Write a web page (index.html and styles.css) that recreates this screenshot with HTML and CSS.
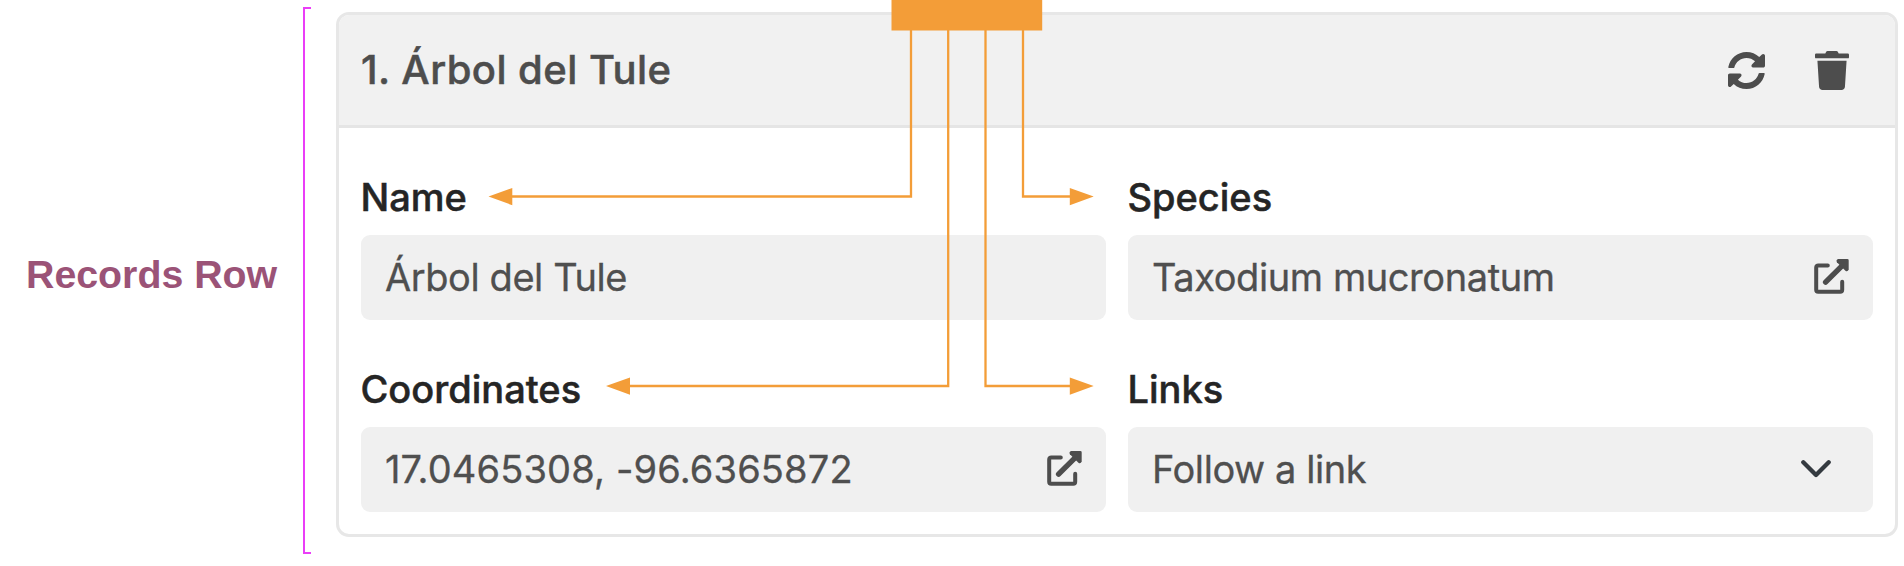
FILE: index.html
```html
<!DOCTYPE html>
<html lang="en">
<head>
<meta charset="utf-8">
<title>Records Row</title>
<link rel="stylesheet" href="styles.css">
</head>
<body>
<main class="figure">
  <div class="caption"><span class="caption-text">Records Row</span></div>
  <div class="bracket"></div>
  <section class="card">
    <header class="card-header">
      <h2 class="title">1. Árbol del Tule</h2>
      <div class="actions">
        <svg class="icon-sync" viewBox="8 8 496 496"><path d="M370.72 133.28C339.458 104.008 298.888 87.962 255.848 88c-77.458.068-144.328 53.178-162.791 126.85-1.344 5.363-6.122 9.15-11.651 9.15H24.103c-7.498 0-13.194-6.807-11.807-14.176C33.933 94.924 134.813 8 256 8c66.448 0 126.791 26.136 171.315 68.685L463.03 40.97C478.149 25.851 504 36.559 504 57.941V192c0 13.255-10.745 24-24 24H345.941c-21.382 0-32.09-25.851-16.971-40.971l41.75-41.749zM32 296h134.059c21.382 0 32.09 25.851 16.971 40.971l-41.75 41.75c31.262 29.273 71.835 45.319 114.876 45.28 77.418-.07 144.315-53.144 162.787-126.849 1.344-5.363 6.122-9.15 11.651-9.15h57.304c7.498 0 13.194 6.807 11.807 14.176C478.067 417.076 377.187 504 256 504c-66.448 0-126.791-26.136-171.315-68.685L48.97 471.03C33.851 486.149 8 475.441 8 454.059V320c0-13.255 10.745-24 24-24z"/></svg>
        <svg class="icon-trash" viewBox="0 0 448 512"><path d="M432 32H312l-9.4-18.7A24 24 0 0 0 281.1 0H166.8a23.72 23.72 0 0 0-21.4 13.3L136 32H16A16 16 0 0 0 0 48v32a16 16 0 0 0 16 16h416a16 16 0 0 0 16-16V48a16 16 0 0 0-16-16zM53.2 467a48 48 0 0 0 47.9 45h245.8a48 48 0 0 0 47.9-45L416 128H32z"/></svg>
      </div>
    </header>
    <div class="fields">
      <div class="field">
        <div class="label name">Name</div>
        <div class="value"><span class="v-name">Árbol del Tule</span></div>
      </div>
      <div class="field">
        <div class="label species">Species</div>
        <div class="value"><span class="v-species">Taxodium mucronatum</span>
          <svg class="icon-open" viewBox="0 0 35 35"><path class="stroke" d="M13.800 6.400H4.200a2 2 0 0 0-2 2V30.700a2 2 0 0 0 2 2H26.200a2 2 0 0 0 2-2V22.800"/><path class="shaft" d="M11.600 23.200 29.500 5.300"/><path d="M24.200.1H33.300q1.400 0 1.400 1.400V10.600q-1 2.400-3 1.400L22.900 3.200q-1.200-2.200 1.300-3.100z"/></svg>
        </div>
      </div>
      <div class="field">
        <div class="label coords">Coordinates</div>
        <div class="value"><span class="v-coords">17.0465308, -96.6365872</span>
          <svg class="icon-open" viewBox="0 0 35 35"><path class="stroke" d="M13.800 6.400H4.200a2 2 0 0 0-2 2V30.700a2 2 0 0 0 2 2H26.200a2 2 0 0 0 2-2V22.800"/><path class="shaft" d="M11.600 23.200 29.500 5.300"/><path d="M24.200.1H33.300q1.400 0 1.400 1.400V10.600q-1 2.400-3 1.400L22.900 3.200q-1.200-2.200 1.300-3.100z"/></svg>
        </div>
      </div>
      <div class="field">
        <div class="label links">Links</div>
        <div class="value"><span class="v-links">Follow a link</span>
          <svg class="icon-chevron" viewBox="0 0 30 18"><path d="M2.300 2.300 15 15 27.700 2.300"/></svg>
        </div>
      </div>
    </div>
  </section>
  <!-- callout connectors drawn over the card -->
  <svg class="connectors" viewBox="0 0 1904 566">
    <path class="wire" d="M911 30V196.500H511M948.200 30V386H629M985.500 30V386H1071M1023 30V196.500H1070"/>
    <path class="solid" d="M891.500 0H1042.200V30.400H891.500zM488.500 196.500 512.300 188V205.200zM606 386 630 377.500V394.700zM1093.700 386 1069.800 377.500V394.700zM1093.700 196.500 1069.800 188V205.200z"/>
  </svg>
</main>
</body>
</html>
```
FILE: styles.css
```css
* { box-sizing: border-box; }
body { margin: 0; background: #fff; overflow: hidden; }
.figure {
  position: relative;
  display: flex;
  width: 1904px;
  height: 566px;
  font-family: Inter, "Liberation Sans", sans-serif;
}
.caption {
  width: 303px;
  padding: 252px 0 0 26px;
  font: bold 39.3px/45px "Liberation Sans", Arial, sans-serif;
  color: #9b5377;
  white-space: nowrap;
}
.bracket {
  width: 8px;
  height: 547px;
  margin-top: 7px;
  border: 2px solid #ea3ef7;
  border-right: 0;
}
.card {
  width: 1562px;
  height: 525px;
  margin: 12px 0 0 25px;
  border: 3px solid #e7e7e7;
  border-radius: 13px;
  overflow: hidden;
}
.card-header {
  display: flex;
  justify-content: space-between;
  align-items: center;
  height: 113px;
  padding: 0 46px 0 22px;
  background: #f1f1f1;
  border-bottom: 3px solid #e5e5e5;
}
.title {
  margin: 0;
  font-size: 40px;
  font-weight: 500;
  letter-spacing: 0.45px;
  line-height: 48px;
  color: #4d4d4d;
  -webkit-text-stroke: 0.5px #4d4d4d;
  white-space: nowrap;
}
.actions { display: flex; align-items: center; gap: 50px; fill: #4d4d4d; }
.icon-sync { width: 37px; height: 37px; }
.icon-trash { width: 34px; height: 39px; }
.fields {
  display: grid;
  grid-template-columns: 745px 745px;
  column-gap: 22px;
  row-gap: 43px;
  padding: 43px 22px 0;
}
.label {
  height: 64px;
  padding-top: 2px;
  font-size: 38px;
  font-weight: 500;
  line-height: 48px;
  color: #252525;
  -webkit-text-stroke: 0.5px #252525;
  text-indent: -0.5px;
}
.value {
  display: flex;
  align-items: center;
  justify-content: space-between;
  height: 85px;
  padding: 0 24px 1px;
  border-radius: 9px;
  background: #f0f0f0;
  font-size: 38px;
  line-height: 48px;
  color: #4f4f4f;
  -webkit-text-stroke: 0.3px #4f4f4f;
  white-space: nowrap;
}
.v-name, .v-species, .v-links { letter-spacing: -0.42px; }
.v-coords { letter-spacing: 0.15px; }
.icon-open { width: 35px; height: 35px; margin-bottom: 1px; fill: #4d4d4d; }
.icon-open .stroke { fill: none; stroke: #4d4d4d; stroke-width: 4; stroke-linecap: round; }
.icon-open .shaft { fill: none; stroke: #4d4d4d; stroke-width: 5.400; stroke-linecap: round; }
.icon-chevron { width: 30px; height: 18px; margin-right: 18px; }
.icon-chevron path {
  fill: none;
  stroke: #343a40;
  stroke-width: 4.300;
  stroke-linecap: round;
  stroke-linejoin: round;
}
.connectors { position: absolute; inset: 0; width: 1904px; height: 566px; }
.wire { fill: none; stroke: #f39d38; stroke-width: 2.300; }
.solid { fill: #f39d38; }
```
